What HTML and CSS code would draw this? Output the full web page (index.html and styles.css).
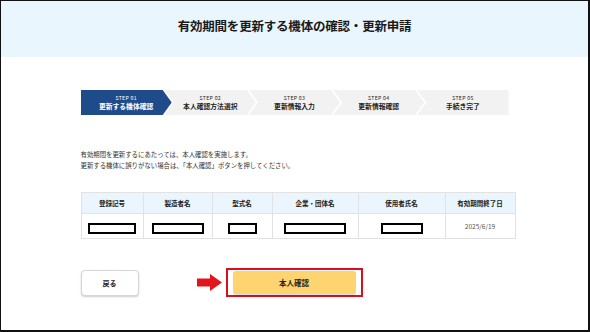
FILE: index.html
```html
<!DOCTYPE html>
<html lang="ja">
<head>
    <meta charset="UTF-8">
    <title>有効期間を更新する機体の確認・更新申請</title>
    <link rel="stylesheet" href="styles.css">
</head>
<body>
    <div class="frame">
        <div class="page-head">
            <h1>有効期間を更新する機体の確認・更新申請</h1>
        </div>
        <div class="content">
            <ol class="steps">
                <li class="step current"><span class="num">STEP 01</span><span class="name">更新する機体確認</span></li>
                <li class="step"><span class="num">STEP 02</span><span class="name">本人確認方法選択</span></li>
                <li class="step"><span class="num">STEP 03</span><span class="name">更新情報入力</span></li>
                <li class="step"><span class="num">STEP 04</span><span class="name">更新情報確認</span></li>
                <li class="step last"><span class="num">STEP 05</span><span class="name">手続き完了</span></li>
            </ol>

            <p class="lead">
                有効期間を更新するにあたっては、本人確認を実施します。<br>
                更新する機体に誤りがない場合は、「本人確認」ボタンを押してください。
            </p>

            <table class="aircraft">
                <thead>
                    <tr>
                        <th class="c1">登録記号</th>
                        <th class="c2">製造者名</th>
                        <th class="c3">型式名</th>
                        <th class="c4">企業・団体名</th>
                        <th class="c5">使用者氏名</th>
                        <th class="c6">有効期間終了日</th>
                    </tr>
                </thead>
                <tbody>
                    <tr>
                        <td><span class="mask m1"></span></td>
                        <td><span class="mask m2"></span></td>
                        <td><span class="mask m3"></span></td>
                        <td><span class="mask m4"></span></td>
                        <td><span class="mask m5"></span></td>
                        <td class="date">2025/6/19</td>
                    </tr>
                </tbody>
            </table>

            <div class="actions">
                <button class="btn-back">戻る</button>
                <div class="confirm-area">
                    <svg class="pointer" width="25" height="17" viewBox="0 0 25 17">
                        <path d="M0 4.5 H13 V0 L25 8.5 L13 17 V12.5 H0 Z" fill="#e0151e"/>
                    </svg>
                    <div class="highlight">
                        <button class="btn-confirm">本人確認</button>
                    </div>
                </div>
            </div>
        </div>
    </div>
</body>
</html>
```

FILE: styles.css
```css
body {
    margin: 0;
    padding: 0;
    background-color: #ffffff;
    font-family: "Noto Sans CJK JP", "Noto Sans", sans-serif;
    color: #222;
}
.frame {
    width: 590px;
    height: 332px;
    box-sizing: border-box;
    border: 1px solid #111;
    border-right-width: 2px;
    border-bottom-width: 2px;
    overflow: hidden;
}
.page-head {
    height: 56px;
    background-color: #eaf6fe; /* pale blue band */
    display: flex;
    align-items: center;
    justify-content: center;
}
.page-head h1 {
    margin: 0;
    font-size: 12.5px;
    font-weight: 700;
    color: #1a1a1a;
    letter-spacing: -0.2px;
    padding-bottom: 8px;
}
.content {
    width: 428px;
    margin: 0 auto;
    padding-top: 33px;
}
.steps {
    list-style: none;
    margin: 0;
    padding: 0;
    display: flex;
    height: 25px;
}
.step {
    flex: 1;
    margin-left: -7px;
    background-color: #f2f2f2;
    display: flex;
    flex-direction: column;
    align-items: center;
    justify-content: center;
    clip-path: polygon(0 0, calc(100% - 9px) 0, 100% 50%, calc(100% - 9px) 100%, 0 100%, 9px 50%);
    color: #222;
}
.step.current {
    margin-left: 0;
    background-color: #1f4b8a;
    color: #fff;
    clip-path: polygon(0 0, calc(100% - 9px) 0, 100% 50%, calc(100% - 9px) 100%, 0 100%);
}
.step.last {
    clip-path: polygon(0 0, 100% 0, 100% 100%, 0 100%, 9px 50%);
}
.step .num {
    font-size: 5.2px;
    line-height: 8px;
    letter-spacing: 0.3px;
}
.step .name {
    font-size: 6.8px;
    line-height: 9px;
    font-weight: 700;
}
.lead {
    margin: 34px 0 0;
    font-size: 6.4px;
    line-height: 11px;
    color: #333;
}
.aircraft {
    margin-top: 21px;
    width: 428px;
    border-collapse: collapse;
    table-layout: fixed;
}
.aircraft th, .aircraft td {
    border: 1px solid #e2e2e2;
    text-align: center;
    padding: 0;
}
.aircraft th {
    height: 20px;
    background-color: #eaf5fd;
    font-size: 6.5px;
    font-weight: 700;
    color: #222;
}
.aircraft td {
    height: 21px;
}
.c1 { width: 61px; }
.c2 { width: 68px; }
.c3 { width: 59px; }
.c4 { width: 85px; }
.c5 { width: 86px; }
.c6 { width: 69px; }
.mask {
    display: inline-block;
    height: 7px;
    border: 2px solid #000;
    background-color: #fff;
    vertical-align: middle;
}
.m1 { width: 44px; }
.m2 { width: 48px; }
.m3 { width: 25px; }
.m4 { width: 58px; }
.m5 { width: 38px; }
.date {
    font-size: 6.5px;
    color: #555;
}
.actions {
    margin-top: 29px;
    display: flex;
    align-items: center;
}
.btn-back {
    width: 58px;
    height: 26px;
    background-color: #fff;
    border: 1px solid #d6d6d6;
    border-radius: 4px;
    box-shadow: 0 1px 2px rgba(0, 0, 0, 0.2);
    font-family: inherit;
    font-size: 7px;
    font-weight: 700;
    color: #222;
    padding: 0;
}
.confirm-area {
    display: flex;
    align-items: center;
    margin-left: 58px;
    gap: 4px;
}
.highlight {
    display: flex;
    border: 2px solid #d7101c;
    padding: 1px 5px;
}
.btn-confirm {
    width: 123px;
    height: 23px;
    background-color: #fdd46f;
    border: none;
    border-radius: 3px;
    box-shadow: 0 1px 1px rgba(0, 0, 0, 0.15);
    font-family: inherit;
    font-size: 7.5px;
    font-weight: 700;
    color: #222;
    padding: 0;
}
```
